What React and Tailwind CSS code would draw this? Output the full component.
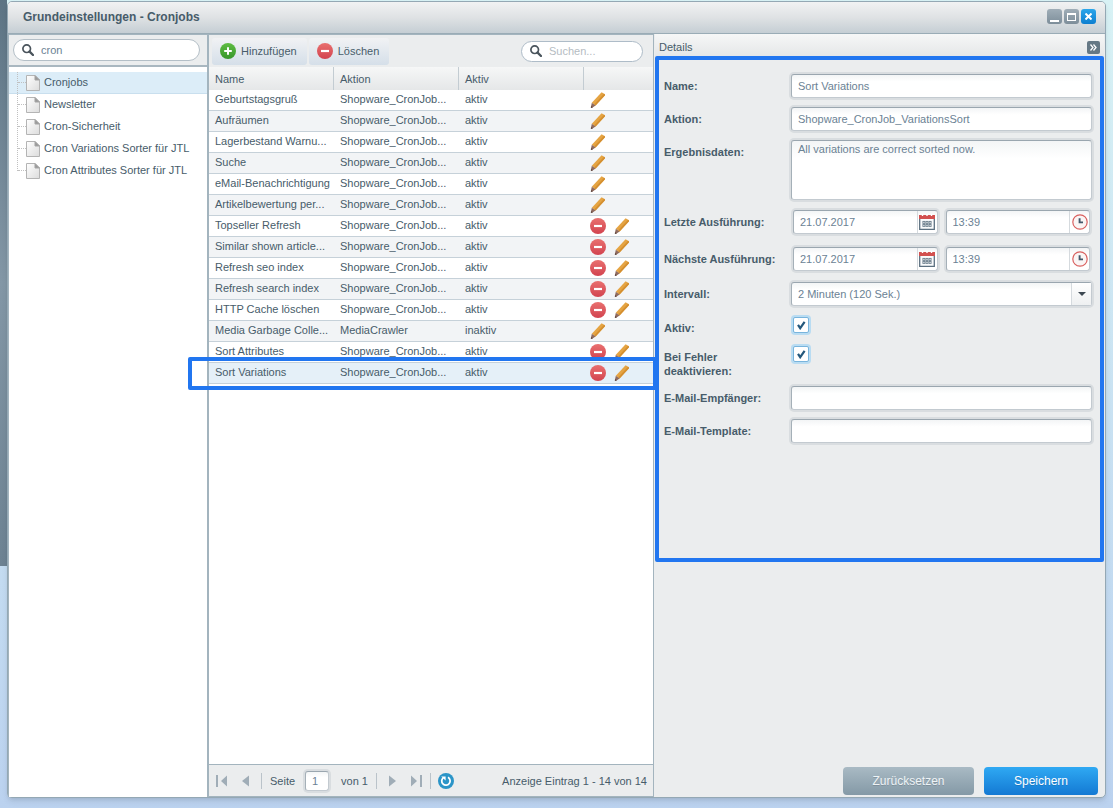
import { useState } from 'react';

const treeItems = [
  'Cronjobs',
  'Newsletter',
  'Cron-Sicherheit',
  'Cron Variations Sorter für JTL',
  'Cron Attributes Sorter für JTL',
];

const cronjobs = [
  { name: 'Geburtstagsgruß', action: 'Shopware_CronJob...', active: 'aktiv' },
  { name: 'Aufräumen', action: 'Shopware_CronJob...', active: 'aktiv' },
  { name: 'Lagerbestand Warnu...', action: 'Shopware_CronJob...', active: 'aktiv' },
  { name: 'Suche', action: 'Shopware_CronJob...', active: 'aktiv' },
  { name: 'eMail-Benachrichtigung', action: 'Shopware_CronJob...', active: 'aktiv' },
  { name: 'Artikelbewertung per...', action: 'Shopware_CronJob...', active: 'aktiv' },
  { name: 'Topseller Refresh', action: 'Shopware_CronJob...', active: 'aktiv', removable: true },
  { name: 'Similar shown article...', action: 'Shopware_CronJob...', active: 'aktiv', removable: true },
  { name: 'Refresh seo index', action: 'Shopware_CronJob...', active: 'aktiv', removable: true },
  { name: 'Refresh search index', action: 'Shopware_CronJob...', active: 'aktiv', removable: true },
  { name: 'HTTP Cache löschen', action: 'Shopware_CronJob...', active: 'aktiv', removable: true },
  { name: 'Media Garbage Colle...', action: 'MediaCrawler', active: 'inaktiv' },
  { name: 'Sort Attributes', action: 'Shopware_CronJob...', active: 'aktiv', removable: true },
  { name: 'Sort Variations', action: 'Shopware_CronJob...', active: 'aktiv', removable: true, selected: true },
];

const SearchIcon = () => (
  <svg className="shrink-0" width="12" height="12" viewBox="0 0 12 12" fill="none" stroke="#4a545c">
    <circle cx="4.7" cy="4.7" r="3.8" strokeWidth="1.7" />
    <path d="M7.6 7.6l3.4 3.4" strokeWidth="2.3" strokeLinecap="round" />
  </svg>
);

const PlusIcon = () => (
  <svg width="16" height="16" viewBox="0 0 16 16">
    <defs>
      <linearGradient id="plus" x1="0" y1="0" x2="0" y2="1">
        <stop offset="0" stopColor="#5fbd43" />
        <stop offset="1" stopColor="#38962a" />
      </linearGradient>
    </defs>
    <circle cx="8" cy="8" r="8" fill="url(#plus)" />
    <path d="M8 4.2v7.6M4.2 8h7.6" stroke="#fff" strokeWidth="2" />
  </svg>
);

const MinusIcon = () => (
  <svg width="16" height="16" viewBox="0 0 16 16">
    <defs>
      <linearGradient id="minus" x1="0" y1="0" x2="0" y2="1">
        <stop offset="0" stopColor="#e9706f" />
        <stop offset="1" stopColor="#d2434f" />
      </linearGradient>
    </defs>
    <circle cx="8" cy="8" r="8" fill="url(#minus)" />
    <path d="M4 8h8" stroke="#fff" strokeWidth="2.2" />
  </svg>
);

const PencilIcon = () => (
  <svg width="16" height="16" viewBox="0 0 16 16">
    <path d="M11.6 0.2L15 2.2 14.8 3.4 5.6 13.6 1.8 10.8z" fill="#e5a443" />
    <path d="M14 1.7L15 2.4 14.8 3.4 5.6 13.6 4.2 12.5z" fill="#d48f30" />
    <path d="M1.8 10.8L5.6 13.6 1.8 16 0.8 15.6z" fill="#8f6a5e" />
    <path d="M1.2 14L2.8 15.3 1.6 16 0.8 15.6z" fill="#5f4a44" />
  </svg>
);

const PageIcon = () => (
  <svg width="14" height="16" viewBox="0 0 14 16">
    <defs>
      <linearGradient id="page" x1="0" y1="0" x2="1" y2="1">
        <stop offset="0" stopColor="#fff" />
        <stop offset="1" stopColor="#dcdcdc" />
      </linearGradient>
    </defs>
    <path d="M0.5 0.5h8.5l4.5 4.5v10.5h-13z" fill="url(#page)" stroke="#b4b4b4" />
    <path d="M9 0.5v4.5h4.5z" fill="#999" stroke="#a5a5a5" />
  </svg>
);

const CalendarIcon = () => (
  <svg width="16" height="16" viewBox="0 0 16 16">
    <path d="M0.7 3.5h14.6v11.8H0.7z" fill="#fafbfc" stroke="#5c7080" strokeWidth="1.3" />
    <path d="M0 1h16v4H0z" fill="#d2504f" />
    <path d="M3.5 0v2M8 0v2M12.5 0v2" stroke="#fff" strokeWidth="1.4" />
    <g fill="none" stroke="#6d7f8d" strokeWidth="0.9">
      <rect x="3.9" y="7.4" width="2" height="2" />
      <rect x="7" y="7.4" width="2" height="2" />
      <rect x="10.1" y="7.4" width="2" height="2" />
      <rect x="3.9" y="10.4" width="2" height="2" />
      <rect x="7" y="10.4" width="2" height="2" />
      <rect x="10.1" y="10.4" width="2" height="2" />
    </g>
  </svg>
);

const ClockIcon = () => (
  <svg width="16" height="16" viewBox="0 0 16 16" fill="none">
    <circle cx="8" cy="8" r="7.2" fill="#faf5f5" stroke="#d9605f" strokeWidth="1.2" />
    <path d="M7.6 4.2v4.2h3.4" stroke="#43586a" strokeWidth="1.9" />
  </svg>
);

const RefreshIcon = () => (
  <svg width="16" height="16" viewBox="0 0 16 16" fill="none">
    <circle cx="8" cy="8" r="8" fill="#2b95c8" />
    <path d="M10 4.3a4.2 4.2 0 11-4.6 0.3" stroke="#fff" strokeWidth="1.8" />
    <path d="M3.2 3.4h4.4v4.2z" fill="#fff" />
  </svg>
);

const frame =
  'rounded-[3px] border border-[#c3cad0] border-t-[#9aa6af] border-l-[#a5b0b8] bg-white bg-linear-to-b from-[#f3f5f6] to-white to-30% ring-2 ring-[#d9dde0]';
const inputText = 'text-[11px] text-[#6b8294] outline-none';
const fieldLabel = 'w-[127px] shrink-0 font-bold';

const TextField = ({ id, label, value = '' }) => (
  <div className="flex items-center">
    <label htmlFor={id} className={fieldLabel}>{label}</label>
    <input id={id} defaultValue={value} className={`${frame} ${inputText} h-6 min-w-0 flex-1 px-1.5`} />
  </div>
);

const DateTimeField = ({ id, label }) => (
  <div className="flex items-center">
    <label htmlFor={id} className={fieldLabel}>{label}</label>
    <div className="flex min-w-0 flex-1 gap-2 px-0.5">
      <div className={`${frame} flex h-6 min-w-0 flex-1 items-center`}>
        <input id={id} defaultValue="21.07.2017" className={`${inputText} min-w-0 flex-1 px-1.5`} />
        <button type="button" aria-label="Datum wählen" className="flex h-full w-5 shrink-0 items-center justify-center border-l border-[#d5dade]">
          <CalendarIcon />
        </button>
      </div>
      <div className={`${frame} flex h-6 min-w-0 flex-1 items-center`}>
        <input aria-label={`${label} Uhrzeit`} defaultValue="13:39" className={`${inputText} min-w-0 flex-1 px-1.5`} />
        <button type="button" aria-label="Uhrzeit wählen" className="flex h-full w-5 shrink-0 items-center justify-center border-l border-[#d5dade]">
          <ClockIcon />
        </button>
      </div>
    </div>
  </div>
);

const CheckField = ({ id, label }) => {
  const [checked, setChecked] = useState(true);
  return (
    <div className="flex items-start">
      <label htmlFor={id} className={`${fieldLabel} pt-1 pr-8 leading-3.5`}>{label}</label>
      <div className="relative ml-0.5 size-4">
        <input
          id={id}
          type="checkbox"
          checked={checked}
          onChange={(e) => setChecked(e.target.checked)}
          className="block size-4 appearance-none rounded-[2px] border border-[#78b4dc] bg-white ring-2 ring-[#b9dcf2]"
        />
        {checked && (
          <svg className="pointer-events-none absolute top-1 left-1" width="9" height="9" viewBox="0 0 9 9" fill="none" stroke="#24587c" strokeWidth="2.2">
            <path d="M1 3.8l2.2 3.4L7.6 0.8" />
          </svg>
        )}
      </div>
    </div>
  );
};

const TitleBar = () => (
  <header className="flex h-8 shrink-0 items-center justify-between rounded-t-[4px] border-b border-[#9aacb6] bg-linear-to-b from-[#f1f2f3] via-[#dfe2e4] to-[#c5ced4] pr-[9px] pl-[15px]">
    <h1 className="-mt-0.5 text-[12px] font-bold text-[#475c6a]">Grundeinstellungen - Cronjobs</h1>
    <div className="-mt-0.5 flex gap-0.5">
      <button type="button" aria-label="Minimieren" className="flex size-[15px] items-end justify-center rounded-[3px] bg-linear-to-b from-[#9fadb7] to-[#7d8e9a] pb-0.5">
        <span className="h-0.5 w-[9px] bg-white" />
      </button>
      <button type="button" aria-label="Maximieren" className="flex size-[15px] items-center justify-center rounded-[3px] bg-linear-to-b from-[#9fadb7] to-[#7d8e9a]">
        <span className="h-2 w-[9px] border border-t-2 border-white" />
      </button>
      <button type="button" aria-label="Schließen" className="flex size-[15px] items-center justify-center rounded-[3px] bg-linear-to-b from-[#2ba6ea] to-[#0d7fd0]">
        <svg width="7" height="7" viewBox="0 0 7 7" stroke="#fff" strokeWidth="2">
          <path d="M0.5 0.5l6 6M6.5 0.5l-6 6" />
        </svg>
      </button>
    </div>
  </header>
);

const Sidebar = () => (
  <aside className="flex w-[201px] shrink-0 flex-col border-t border-r-2 border-l border-[#a3b4be] bg-white">
    <div className="h-8 border-b-2 border-[#a9b7c0] bg-[#ebedee] py-1 pr-[7px] pl-1">
      <label className="flex h-[22px] items-center gap-[7px] rounded-full border border-[#b4bfc7] bg-white px-2">
        <SearchIcon />
        <input aria-label="Suche" defaultValue="cron" className={`${inputText} min-w-0 flex-1`} />
      </label>
    </div>
    <ul className="pt-[5px]">
      {treeItems.map((item, i) => (
        <li key={item} className={i === 0 ? 'border-b border-[#c9dfee] bg-[#dcedf8]' : 'border-b border-transparent'}>
          <a href="#" className="flex h-[21px]">
            <span className={`ml-2 w-[9px] self-stretch border-l border-dotted border-[#c0c0c0] ${i === treeItems.length - 1 ? 'mb-2.5' : ''}`}>
              <span className={`block border-b border-dotted border-[#c0c0c0] ${i === treeItems.length - 1 ? 'h-full' : 'h-1/2'}`} />
            </span>
            <span className="pt-[3px]"><PageIcon /></span>
            <span className="ml-1 pt-0.5">{item}</span>
          </a>
        </li>
      ))}
    </ul>
  </aside>
);

const Toolbar = () => {
  const button =
    'flex h-[27px] items-center gap-[5px] rounded-[3px] bg-linear-to-b from-[#f1f2f4] to-[#d5dfe9] pr-2.5 pl-2';
  return (
    <div className="flex h-8 shrink-0 items-center gap-0.5 bg-[#ebedee] pr-2.5 pl-[3px]">
      <button type="button" className={button}>
        <PlusIcon />
        Hinzufügen
      </button>
      <button type="button" className={button}>
        <MinusIcon />
        Löschen
      </button>
      <label className="ml-auto flex h-[21px] w-[122px] items-center gap-[7px] rounded-full border border-[#aebcc8] bg-white px-2">
        <SearchIcon />
        <input aria-label="Suchen" placeholder="Suchen..." className={`${inputText} min-w-0 flex-1 placeholder:text-[#b5bcc2]`} />
      </label>
    </div>
  );
};

const CronTable = () => (
  <div className="relative">
    <table className="w-full table-fixed border-separate border-spacing-0 text-left">
      <colgroup>
        <col className="w-[125px]" />
        <col className="w-[125px]" />
        <col className="w-[125px]" />
        <col />
      </colgroup>
      <thead>
        <tr className="h-[23px] bg-linear-to-b from-[#f6f7f7] to-[#e5e7e8]">
          <th className="border-r border-[#c3ccd2] px-1.5 font-normal">Name</th>
          <th className="border-r border-[#c3ccd2] px-1.5 font-normal">Aktion</th>
          <th className="border-r border-[#c3ccd2] px-1.5 font-normal">Aktiv</th>
          <th aria-label="Optionen" />
        </tr>
      </thead>
      <tbody className="[&_td]:h-[21px] [&_td]:border-b [&_td]:border-[#c6d1d9] [&_td]:p-0 [&_td]:pl-1.5 [&_td]:align-top [&_td]:leading-[18px] [&_td]:whitespace-nowrap">
        {cronjobs.map((job, i) => (
          <tr key={job.name} className={job.selected ? 'bg-[#e5f0f8]' : i % 2 ? 'bg-[#f2f4f6]' : 'bg-white'}>
            <td>{job.name}</td>
            <td>{job.action}</td>
            <td>{job.active}</td>
            <td>
              <div className="flex gap-2 pt-0.5">
                {job.removable && (
                  <button type="button" aria-label="Löschen"><MinusIcon /></button>
                )}
                <button type="button" aria-label="Bearbeiten"><PencilIcon /></button>
              </div>
            </td>
          </tr>
        ))}
      </tbody>
    </table>
    {/* marker around the selected job */}
    <div className="pointer-events-none absolute -right-1 -bottom-1.5 -left-[21px] h-[33px] rounded-[2px] border-4 border-[#2176f0]" />
  </div>
);

const Pager = () => {
  const divider = 'h-4 w-px bg-[#bac3ca]';
  return (
    <footer className="mt-auto flex h-8 shrink-0 items-center border-t border-[#a3b4be] bg-[#ebedee] pr-1.5 pl-[7px]">
      <button type="button" aria-label="Erste Seite">
        <svg width="12" height="12" viewBox="0 0 12 12" fill="#a0adb7"><path d="M0 0h2v12H0zM11 0.5v11L5 6z" /></svg>
      </button>
      <button type="button" aria-label="Vorherige Seite" className="ml-3.5">
        <svg width="7" height="12" viewBox="0 0 7 12" fill="#a0adb7"><path d="M7 0.5v11L0 6z" /></svg>
      </button>
      <span className={`${divider} ml-3`} />
      <label htmlFor="page-no" className="ml-2">Seite</label>
      <input id="page-no" defaultValue="1" className={`${frame} ${inputText} ml-2.5 h-5 w-6 px-1.5`} />
      <span className="ml-3">von 1</span>
      <span className={`${divider} ml-2`} />
      <button type="button" aria-label="Nächste Seite" className="ml-3">
        <svg width="7" height="12" viewBox="0 0 7 12" fill="#a0adb7"><path d="M0 0.5v11L7 6z" /></svg>
      </button>
      <button type="button" aria-label="Letzte Seite" className="ml-3.5">
        <svg width="12" height="12" viewBox="0 0 12 12" fill="#a0adb7"><path d="M10 0h2v12h-2zM1 0.5v11L7 6z" /></svg>
      </button>
      <span className={`${divider} ml-2`} />
      <button type="button" aria-label="Aktualisieren" className="ml-[7px]"><RefreshIcon /></button>
      <span className="ml-auto">Anzeige Eintrag 1 - 14 von 14</span>
    </footer>
  );
};

const Details = () => (
  <section className="flex w-[452px] shrink-0 flex-col border-l border-[#a3b4be] pr-px pl-px">
    <div className="flex h-[22px] shrink-0 items-center justify-between bg-linear-to-b from-[#f6f7f7] to-[#e5e7e8] pt-1 pr-1 pl-1">
      <h2>Details</h2>
      <button type="button" aria-label="Einklappen" className="flex size-[13px] items-center justify-center rounded-[2px] bg-[#657885]">
        <svg width="7" height="7" viewBox="0 0 7 7" fill="none" stroke="#fff" strokeWidth="1.3"><path d="M0.5 0.5l2.5 3-2.5 3M3.5 0.5l2.5 3-2.5 3" /></svg>
      </button>
    </div>
    <form className="flex h-[506px] flex-col rounded-[2px] border-4 border-[#2176f0] pt-3.5 pr-2 pl-[5px]">
      <div className="flex flex-col gap-[9px]">
        <TextField id="name" label="Name:" value="Sort Variations" />
        <TextField id="action" label="Aktion:" value="Shopware_CronJob_VariationsSort" />
        <div className="flex items-start">
          <label htmlFor="data" className={`${fieldLabel} pt-1`}>Ergebnisdaten:</label>
          <textarea id="data" defaultValue="All variations are correct sorted now." className={`${frame} ${inputText} h-[60px] min-w-0 flex-1 resize-none px-1.5`} />
        </div>
      </div>
      <div className="mt-2.5 flex flex-col gap-[13px]">
        <DateTimeField id="last-run" label="Letzte Ausführung:" />
        <DateTimeField id="next-run" label="Nächste Ausführung:" />
      </div>
      <div className="mt-[11px] flex items-center">
        <label htmlFor="interval" className={fieldLabel}>Intervall:</label>
        <div className={`${frame} relative h-6 min-w-0 flex-1`}>
          <select id="interval" className={`${inputText} block h-full w-full appearance-none px-1.5`}>
            <option>2 Minuten (120 Sek.)</option>
          </select>
          <span className="pointer-events-none absolute inset-y-0 right-0 flex w-5 items-center justify-center border-l border-[#d5dade] bg-linear-to-b from-white to-[#eef0f1]">
            <svg width="8" height="4" viewBox="0 0 8 4"><path d="M0 0h8L4 4z" fill="#3d4852" /></svg>
          </span>
        </div>
      </div>
      <div className="mt-[11px] flex flex-col gap-[11px]">
        <CheckField id="active" label="Aktiv:" />
        <CheckField id="disable-on-error" label="Bei Fehler deaktivieren:" />
      </div>
      <div className="mt-2 flex flex-col gap-[9px]">
        <TextField id="mail-to" label="E-Mail-Empfänger:" />
        <TextField id="mail-template" label="E-Mail-Template:" />
      </div>
    </form>
    <div className="mt-auto flex justify-end gap-2.5 pr-1.5 pb-0.5">
      <button type="button" className="h-7 w-[131px] rounded-[4px] bg-linear-to-b from-[#a9bac4] to-[#8499a6] text-[12px] text-[#eef3f6] text-shadow-2xs">
        Zurücksetzen
      </button>
      <button type="button" className="h-7 w-[114px] rounded-[4px] bg-linear-to-b from-[#2fa9f3] to-[#1479d3] text-[12px] text-white text-shadow-2xs">
        Speichern
      </button>
    </div>
  </section>
);

export default function App() {
  return (
    <div className="flex h-screen bg-linear-to-b from-[#d8f2f5] to-[#bbd2ef] font-['Liberation_Sans',Arial,sans-serif] text-[11px] leading-4 text-[#475c6a]">
      <div className="h-[70vh] w-[7px] shrink-0 bg-linear-to-b from-[#5d7484] via-[#8397a6] to-[#6d8292]" />
      <main className="mt-px mr-[7px] mb-2.5 flex min-w-0 flex-1 flex-col rounded-[5px] border border-[#94a8b4] bg-[#ebedee] shadow-md">
        <TitleBar />
        <div className="flex min-h-0 flex-1">
          <Sidebar />
          <div className="relative flex min-w-0 flex-1 flex-col border-y border-[#a3b4be] bg-white">
            <Toolbar />
            <CronTable />
            <Pager />
          </div>
          <Details />
        </div>
      </main>
    </div>
  );
}
